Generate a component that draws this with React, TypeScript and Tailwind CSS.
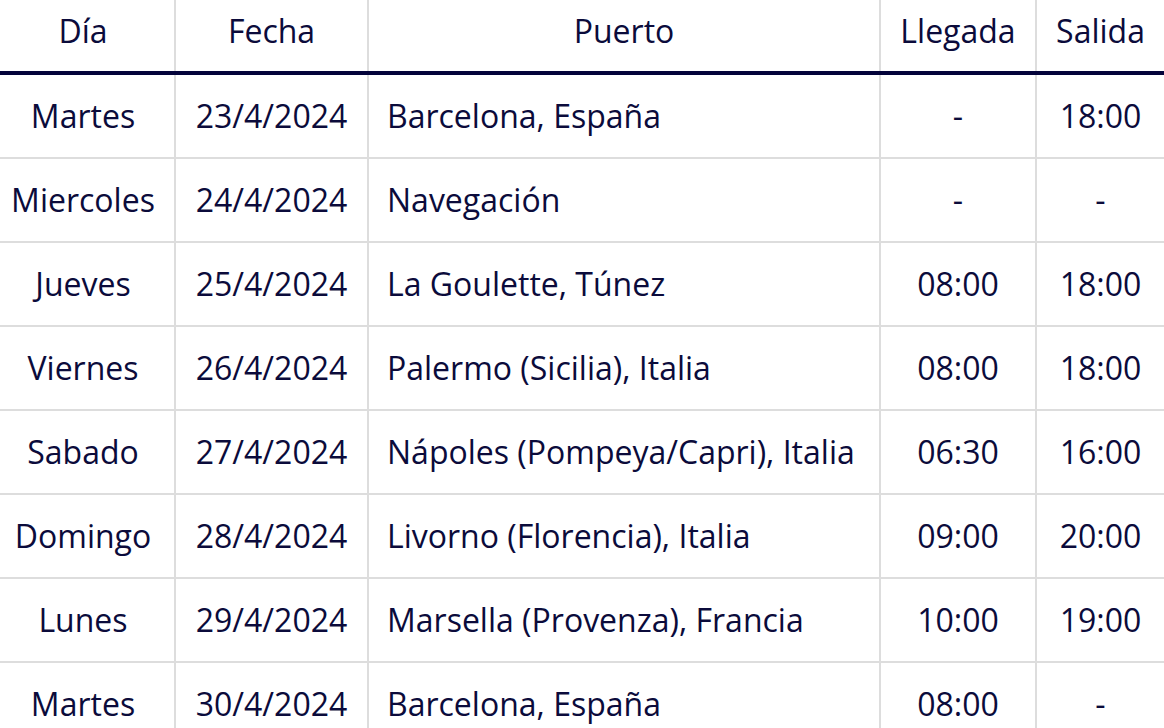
import React from "react";

const rows: [string, string, string, string, string][] = [
  ["Martes", "23/4/2024", "Barcelona, España", "-", "18:00"],
  ["Miercoles", "24/4/2024", "Navegación", "-", "-"],
  ["Jueves", "25/4/2024", "La Goulette, Túnez", "08:00", "18:00"],
  ["Viernes", "26/4/2024", "Palermo (Sicilia), Italia", "08:00", "18:00"],
  ["Sabado", "27/4/2024", "Nápoles (Pompeya/Capri), Italia", "06:30", "16:00"],
  ["Domingo", "28/4/2024", "Livorno (Florencia), Italia", "09:00", "20:00"],
  ["Lunes", "29/4/2024", "Marsella (Provenza), Francia", "10:00", "19:00"],
  ["Martes", "30/4/2024", "Barcelona, España", "08:00", "-"],
];

function Row({ cells, header }: { cells: string[]; header?: boolean }) {
  const rowCls = header
    ? "flex h-[75px] border-b-[4px] border-[#03033a] pb-[10px]"
    : "flex h-[84px] shrink-0 border-b-2 border-[#dddddd]";
  const vline = header ? "border-r-2 border-[#dddddd] -mb-[10px] pb-[10px]" : "border-r-2 border-[#dddddd]";
  return (
    <div className={rowCls}>
      <div className={`w-[176px] shrink-0 ${vline} flex items-center justify-center pr-[8px]`}>
        {cells[0]}
      </div>
      <div className={`w-[193px] shrink-0 ${vline} flex items-center justify-center`}>
        {cells[1]}
      </div>
      <div
        className={
          header
            ? `w-[512px] shrink-0 ${vline} flex items-center justify-center`
            : `w-[512px] shrink-0 ${vline} flex items-center pl-[18px]`
        }
      >
        {cells[2]}
      </div>
      <div className={`w-[156px] shrink-0 ${vline} flex items-center justify-center`}>
        {cells[3]}
      </div>
      <div className="flex-1 flex items-center justify-center">{cells[4]}</div>
    </div>
  );
}

export default function App() {
  return (
    <div
      className="w-[1164px] h-[728px] overflow-hidden bg-white text-[#0b0b3b] text-[32px] leading-[42px]"
      style={{ fontFamily: '"Open Sans", "Noto Sans", sans-serif' }}
    >
      <div className="flex flex-col">
        <Row header cells={["Día", "Fecha", "Puerto", "Llegada", "Salida"]} />
        {rows.map((r, i) => (
          <Row key={i} cells={r} />
        ))}
      </div>
    </div>
  );
}
